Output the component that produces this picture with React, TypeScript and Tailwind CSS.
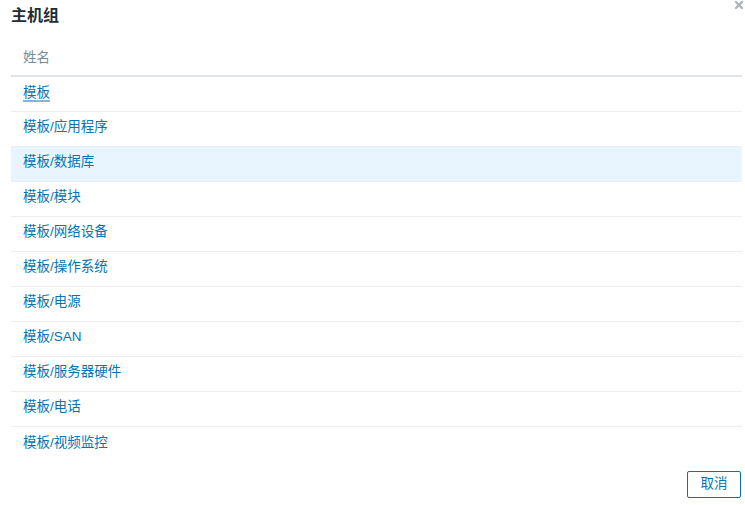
import React from 'react';

const groups = [
  '模板',
  '模板/应用程序',
  '模板/数据库',
  '模板/模块',
  '模板/网络设备',
  '模板/操作系统',
  '模板/电源',
  '模板/SAN',
  '模板/服务器硬件',
  '模板/电话',
  '模板/视频监控',
];

export default function App() {
  const font = { fontFamily: '"Liberation Sans", "Noto Sans CJK SC", Arial, sans-serif' };

  return (
    <div className="relative w-[745px] h-[505px] bg-white overflow-hidden" style={font}>
      <button className="absolute top-[1px] right-[2px] w-[8px] h-[8px] flex items-center justify-center">
        <svg width="8" height="8" viewBox="0 0 8 8">
          <path d="M1 1 L7 7 M7 1 L1 7" stroke="#a7b3ba" strokeWidth="2.2" strokeLinecap="square" />
        </svg>
      </button>

      <div className="pl-[11px] w-[742px]">
        <h4 className="pt-[6px] h-[41px] text-[16px] leading-[20px] font-bold text-[#1f2c33]">主机组</h4>

        <table className="w-full border-collapse text-[13.5px]">
          <thead>
            <tr className="border-b-2 border-[#dfe4e7]">
              <th className="h-[35px] pl-[12px] text-left font-normal text-[#768d99]">姓名</th>
            </tr>
          </thead>
          <tbody>
            {groups.map((g, i) => (
              <tr
                key={g}
                className={
                  (i < groups.length - 1 ? 'border-b border-[#ebeef0] ' : '') +
                  (i === 2 ? 'bg-[#e8f5ff]' : '')
                }
              >
                <td className="h-[35px] pl-[12px] pb-[2px] text-[#0275b8]">
                  {i === 0 ? (
                    <span className="underline decoration-[#7db7dc] decoration-2 underline-offset-[3px]">{g}</span>
                  ) : (
                    g
                  )}
                </td>
              </tr>
            ))}
          </tbody>
        </table>

        <div className="flex justify-end mt-[10px] pr-[1px]">
          <button className="w-[54px] h-[27px] border border-[#0275b8] rounded-[2px] text-[13.5px] text-[#0275b8] bg-white">
            取消
          </button>
        </div>
      </div>
    </div>
  );
}
